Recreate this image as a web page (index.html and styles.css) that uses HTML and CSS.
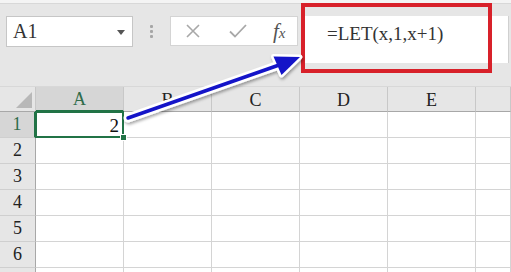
FILE: index.html
```html
<!DOCTYPE html>
<html lang="en">
<head>
    <meta charset="UTF-8">
    <title>LET formula</title>
    <link rel="stylesheet" href="styles.css">
</head>
<body>
    <div class="topline"></div>
    <div class="toolbar">
        <div class="namebox">
            <span>A1</span>
            <svg class="caret" width="8" height="5" viewBox="0 0 8 5"><path d="M0 0h8L4 5z" fill="#555"/></svg>
        </div>
        <div class="grip"><i></i><i></i><i></i></div>
        <div class="buttons">
            <svg width="16" height="16" viewBox="0 0 16 16"><path d="M2 2L14 14M14 2L2 14" stroke="#a8a8a8" stroke-width="1.6"/></svg>
            <svg width="18" height="16" viewBox="0 0 18 16"><path d="M1 8.5L6 13.5L17 2" stroke="#a8a8a8" stroke-width="1.8" fill="none"/></svg>
            <span class="fx">f<sub>x</sub></span>
        </div>
        <div class="formula">=LET(x,1,x+1)</div>
    </div>

    <div class="sheet">
        <div class="corner"><span></span></div>
        <div class="colhead selected">A</div>
        <div class="colhead">B</div>
        <div class="colhead">C</div>
        <div class="colhead">D</div>
        <div class="colhead">E</div>
        <div class="colhead"></div>

        <div class="rowhead selected">1</div>
        <div class="cell active">2</div>
        <div class="cell"></div><div class="cell"></div><div class="cell"></div><div class="cell"></div><div class="cell"></div>

        <div class="rowhead">2</div>
        <div class="cell"></div><div class="cell"></div><div class="cell"></div><div class="cell"></div><div class="cell"></div><div class="cell"></div>
        <div class="rowhead">3</div>
        <div class="cell"></div><div class="cell"></div><div class="cell"></div><div class="cell"></div><div class="cell"></div><div class="cell"></div>
        <div class="rowhead">4</div>
        <div class="cell"></div><div class="cell"></div><div class="cell"></div><div class="cell"></div><div class="cell"></div><div class="cell"></div>
        <div class="rowhead">5</div>
        <div class="cell"></div><div class="cell"></div><div class="cell"></div><div class="cell"></div><div class="cell"></div><div class="cell"></div>
        <div class="rowhead">6</div>
        <div class="cell"></div><div class="cell"></div><div class="cell"></div><div class="cell"></div><div class="cell"></div><div class="cell"></div>
        <div class="rowhead"></div>
        <div class="cell"></div><div class="cell"></div><div class="cell"></div><div class="cell"></div><div class="cell"></div><div class="cell"></div>
    </div>

    <!-- annotation layer -->
    <div class="callout"></div>
    <svg class="arrow" width="511" height="272" viewBox="0 0 511 272">
        <defs>
            <filter id="shade" x="-20%" y="-20%" width="140%" height="140%">
                <feDropShadow dx="1" dy="2" stdDeviation="1.5" flood-color="#000" flood-opacity="0.35"/>
            </filter>
        </defs>
        <g filter="url(#shade)">
            <path d="M128 118L282 64" stroke="#fff" stroke-width="9" stroke-linecap="round"/>
            <path d="M300 57L273.5 56.5L281.5 75z" fill="#fff" stroke="#fff" stroke-width="5" stroke-linejoin="round"/>
        </g>
        <path d="M128 118L282 64" stroke="#1414c8" stroke-width="3.5" stroke-linecap="round"/>
        <path d="M300 57L273.5 56.5L281.5 75z" fill="#1414c8"/>
    </svg>
</body>
</html>
```

FILE: styles.css
```css
body {
    margin: 0;
    width: 511px;
    height: 272px;
    overflow: hidden;
    background-color: #e6e6e6;
    font-family: "Liberation Serif", "Times New Roman", serif;
    position: relative;
}
.topline {
    height: 3px;
    background-color: #f4f4f4;
    border-bottom: 1px solid #d8d8d8;
}
.toolbar {
    height: 82px;
    display: flex;
    align-items: flex-start;
    padding: 12px 0 0 6px;
    box-sizing: border-box;
}
.namebox {
    width: 127px;
    height: 31px;
    box-sizing: border-box;
    background-color: #fff;
    border: 1px solid #c6c6c6;
    display: flex;
    align-items: center;
    justify-content: space-between;
    padding: 0 7px 0 6px;
    font-size: 20px;
    color: #333;
}
.caret {
    margin-top: 2px;
}
.grip {
    width: 37px;
    height: 31px;
    display: flex;
    flex-direction: column;
    align-items: center;
    justify-content: center;
    gap: 2px;
}
.grip i {
    width: 3px;
    height: 3px;
    background-color: #a6a6a6;
    border-radius: 1px;
}
.buttons {
    width: 128px;
    height: 30px;
    box-sizing: border-box;
    background-color: #fff;
    border: 1px solid #d4d4d4;
    display: flex;
    align-items: center;
    padding: 0 8px 0 14px;
    gap: 28px;
}
.fx {
    font-style: italic;
    font-size: 21px;
    color: #555;
    line-height: 1;
    margin-left: -2px;
}
.fx sub {
    font-size: 15px;
    vertical-align: 0;
}
.formula {
    margin-left: 7px;
    width: 204px;
    height: 47px;
    background-color: #fff;
    border-right: 1px solid #d0d0d0;
    box-sizing: border-box;
    padding: 7px 0 0 22px;
    font-size: 19px;
    color: #333;
}
.sheet {
    display: grid;
    grid-template-columns: 36px repeat(5, 88px) 1fr;
    grid-template-rows: 25px repeat(7, 26px);
    border-top: 1px solid #d8d8d8;
}
.corner {
    background-color: #e6e6e6;
    border-right: 1px solid #c8c8c8;
    border-bottom: 1px solid #a8a8a8;
    display: flex;
    align-items: flex-end;
    justify-content: flex-end;
    padding: 0 3px 3px 0;
}
.corner span {
    width: 0;
    height: 0;
    border-left: 16px solid transparent;
    border-bottom: 16px solid #b8b8b8;
}
.colhead,
.rowhead {
    background-color: #e6e6e6;
    color: #222;
    font-size: 18px;
    display: flex;
    align-items: center;
    justify-content: center;
    box-sizing: border-box;
}
.colhead {
    border-right: 1px solid #c8c8c8;
    border-bottom: 1px solid #a8a8a8;
    padding-top: 2px;
}
.rowhead {
    border-right: 1px solid #a8a8a8;
    border-bottom: 1px solid #cfcfcf;
}
.colhead.selected,
.rowhead.selected {
    background-color: #d6d6d6;
    color: #2f6b4a;
}
.colhead.selected {
    border-bottom: 2px solid #217346;
}
.rowhead.selected {
    border-right: 2px solid #217346;
}
.cell {
    background-color: #fff;
    border-right: 1px solid #d4d4d4;
    border-bottom: 1px solid #d4d4d4;
    box-sizing: border-box;
    font-size: 19px;
    color: #111;
}
.cell.active {
    position: relative;
    text-align: right;
    padding: 3px 4px 0 0;
}
.cell.active::before {
    content: "";
    position: absolute;
    left: -1px;
    top: -1px;
    right: -1px;
    bottom: -1px;
    border: 2px solid #217346;
}
.cell.active::after {
    content: "";
    position: absolute;
    right: -4px;
    bottom: -4px;
    width: 5px;
    height: 5px;
    background-color: #217346;
    border: 1px solid #fff;
}
.callout {
    position: absolute;
    left: 301px;
    top: 3px;
    width: 191px;
    height: 70px;
    box-sizing: border-box;
    border: 4px solid #d8212a;
}
.arrow {
    position: absolute;
    left: 0;
    top: 0;
}
```
